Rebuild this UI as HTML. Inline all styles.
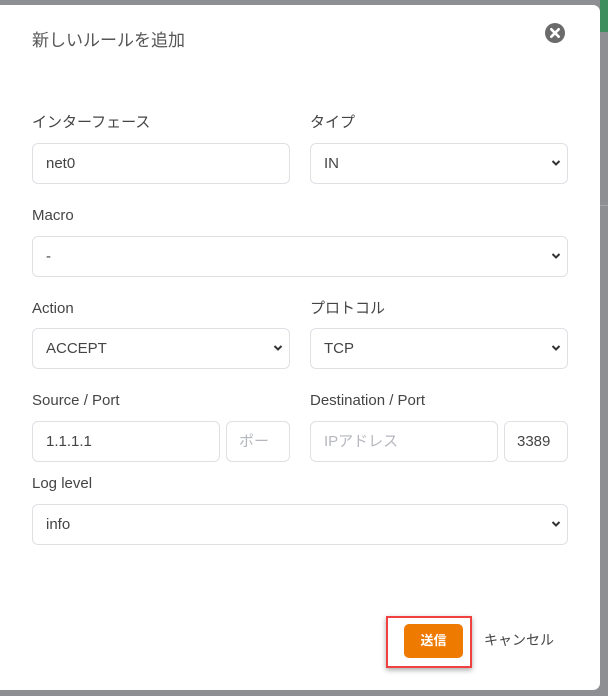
<!DOCTYPE html>
<html><head><meta charset="utf-8"><style>
*{box-sizing:border-box;margin:0;padding:0}
body{width:608px;height:696px;background:#8e8f93;position:relative;overflow:hidden;font-family:"Liberation Sans","Noto Sans CJK JP",sans-serif;color:#444}
.modal{position:absolute;left:-6px;top:5px;width:606px;height:685px;background:#fff;border-radius:7px}
.a{position:absolute}
.lbl{position:absolute;font-size:15px;color:#444;line-height:18px}
.in{position:absolute;height:41px;border:1px solid #dfe0e4;border-radius:6px;font-size:15px;color:#444;padding-left:13px;line-height:39px;background:#fff}
.ph{color:#b5b7be}
.chev{position:absolute;right:6px;top:15px;width:10px;height:8px}
</style></head><body>
<div class="a" style="left:600px;top:0;width:8px;height:32px;background:#3e8e5f"></div>
<div class="a" style="left:600px;top:205px;width:8px;height:1px;background:#a5a6aa"></div>
<div class="modal"></div>
<div class="lbl" style="left:32px;top:32px;font-size:17px;color:#555">新しいルールを追加</div>
<svg class="a" style="left:545px;top:23px" width="20" height="20" viewBox="0 0 20 20"><circle cx="10" cy="10" r="10" fill="#6b6b6b"/><path d="M6.3 6.3L13.7 13.7M13.7 6.3L6.3 13.7" stroke="#fff" stroke-width="2.6" stroke-linecap="round"/></svg>

<div class="lbl" style="left:32px;top:114px">インターフェース</div>
<div class="lbl" style="left:310px;top:114px">タイプ</div>
<div class="in" style="left:32px;top:143px;width:258px">net0</div>
<div class="in" style="left:310px;top:143px;width:258px">IN<svg class="chev" viewBox="0 0 10 8"><path d="M1.5 2L5 5.5 8.5 2" stroke="#333" stroke-width="2" fill="none"/></svg></div>

<div class="lbl" style="left:32px;top:207px">Macro</div>
<div class="in" style="left:32px;top:236px;width:536px">-<svg class="chev" viewBox="0 0 10 8"><path d="M1.5 2L5 5.5 8.5 2" stroke="#333" stroke-width="2" fill="none"/></svg></div>

<div class="lbl" style="left:32px;top:300px">Action</div>
<div class="lbl" style="left:310px;top:300px">プロトコル</div>
<div class="in" style="left:32px;top:328px;width:258px">ACCEPT<svg class="chev" viewBox="0 0 10 8"><path d="M1.5 2L5 5.5 8.5 2" stroke="#333" stroke-width="2" fill="none"/></svg></div>
<div class="in" style="left:310px;top:328px;width:258px">TCP<svg class="chev" viewBox="0 0 10 8"><path d="M1.5 2L5 5.5 8.5 2" stroke="#333" stroke-width="2" fill="none"/></svg></div>

<div class="lbl" style="left:32px;top:392px">Source / Port</div>
<div class="lbl" style="left:310px;top:392px">Destination / Port</div>
<div class="in" style="left:32px;top:421px;width:188px">1.1.1.1</div>
<div class="in ph" style="left:226px;top:421px;width:64px;overflow:hidden;white-space:nowrap;padding-left:12px">ポー</div>
<div class="in ph" style="left:310px;top:421px;width:188px">IPアドレス</div>
<div class="in" style="left:504px;top:421px;width:64px;padding-left:12px">3389</div>

<div class="lbl" style="left:32px;top:475px">Log level</div>
<div class="in" style="left:32px;top:504px;width:536px">info<svg class="chev" viewBox="0 0 10 8"><path d="M1.5 2L5 5.5 8.5 2" stroke="#333" stroke-width="2" fill="none"/></svg></div>

<div class="a" style="left:386px;top:616px;width:86px;height:52px;border:2px solid #f04040;box-shadow:0 2px 5px rgba(0,0,0,.35);background:#fff"></div>
<div class="a" style="left:404px;top:624px;width:59px;height:34px;background:#ef7a00;border-radius:5px;color:#fff;font-size:13px;font-weight:bold;text-align:center;line-height:34px">送信</div>
<div class="lbl" style="left:484px;top:631px;font-size:14px;color:#444">キャンセル</div>
</body></html>
